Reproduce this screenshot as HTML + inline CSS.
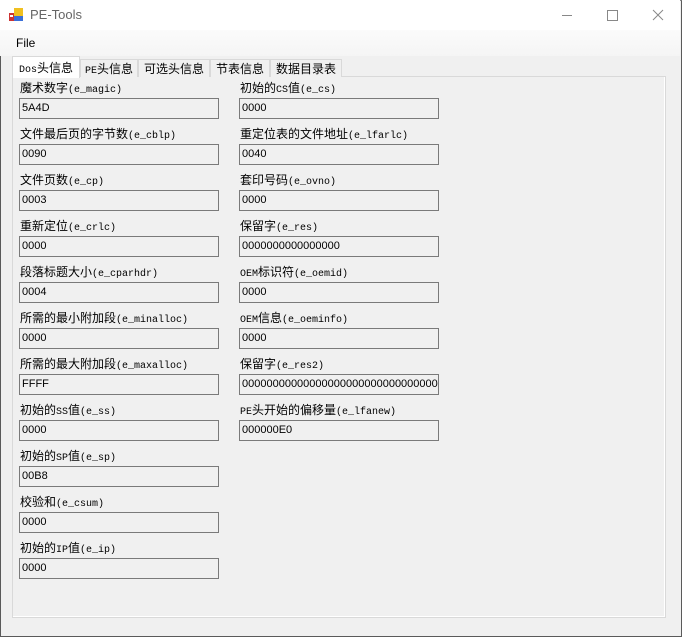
<!DOCTYPE html>
<html><head><meta charset="utf-8"><style>
*{margin:0;padding:0;box-sizing:border-box}
body{width:682px;height:637px;background:#f0f0f0;font-family:"Liberation Sans","Noto Sans CJK SC",sans-serif;font-size:12px;color:#000;position:relative;overflow:hidden}
.win{position:absolute;left:0;top:0;width:682px;height:637px;border:1px solid #5a5a5a;border-top-color:#888}
.title{position:absolute;left:0;top:0;width:680px;height:30px;background:#fff}
.title span{position:absolute;left:30px;top:7px;font-size:13px;color:#666}
.menu{position:absolute;left:0;top:30px;width:680px;height:26px;background:linear-gradient(#fbfbfb,#f5f5f5)}
.menu span{position:absolute;left:16px;top:6px;font-size:12px}
.tabs{position:absolute;top:56px;left:12px;height:21px}
.tab{position:absolute;top:3px;height:18px;border:1px solid #d9d9d9;border-bottom:none;background:#f0f0f0;font-size:12px;padding-top:1px;text-align:center;font-family:"Noto Sans CJK SC",sans-serif;line-height:16px}
.tab.sel{top:0;height:22px;background:#fff;z-index:2;padding-top:3px}
.page{position:absolute;left:12px;top:76px;width:654px;height:542px;border:1px solid #d9d9d9;background:#f0f0f0}
.page:after{content:"";position:absolute;inset:0;border:1px solid #fff;border-top:none;border-left:none}
.lbl{position:absolute;font-size:12px;font-family:"Noto Sans CJK SC",sans-serif;white-space:nowrap;line-height:16px}
i{font-style:normal;font-family:"Liberation Mono",monospace;font-size:10px}
.box{position:absolute;width:200px;height:21px;border:1px solid #7a7a7a;background:#f0f0f0;font-size:11px;padding:3px 0 0 2px;overflow:hidden;white-space:nowrap;font-family:"Liberation Sans",sans-serif}
</style></head><body>
<div class="win"></div>
<div class="title">
<svg style="position:absolute;left:9px;top:8px" width="14" height="14"><rect x="0" y="5" width="5" height="8" fill="#c33"/><rect x="5" y="0" width="9" height="8" fill="#f0c020"/><rect x="5" y="8" width="9" height="5" fill="#3a6fd8"/><rect x="1" y="7" width="3" height="2" fill="#fff"/></svg>
<span>PE-Tools</span>
<svg style="position:absolute;left:560px;top:8px" width="110" height="14"><line x1="2" y1="7.5" x2="12" y2="7.5" stroke="#888"/><rect x="47.5" y="2.5" width="10" height="10" fill="none" stroke="#888"/><path d="M93 2L103 12M103 2L93 12" stroke="#888"/></svg>
</div>
<div class="menu"><span>File</span></div>
<div class="page"></div>
<div class="tabs">
<div class="tab sel" style="left:0;width:68px"><i>Dos</i>头信息</div>
<div class="tab" style="left:68px;width:58px"><i>PE</i>头信息</div>
<div class="tab" style="left:126px;width:72px">可选头信息</div>
<div class="tab" style="left:198px;width:60px">节表信息</div>
<div class="tab" style="left:258px;width:72px">数据目录表</div>
</div>

<div class="lbl" style="left:20px;top:80px">魔术数字<i>(e_magic)</i></div><div class="box" style="left:19px;top:98px">5A4D</div>
<div class="lbl" style="left:20px;top:126px">文件最后页的字节数<i>(e_cblp)</i></div><div class="box" style="left:19px;top:144px">0090</div>
<div class="lbl" style="left:20px;top:172px">文件页数<i>(e_cp)</i></div><div class="box" style="left:19px;top:190px">0003</div>
<div class="lbl" style="left:20px;top:218px">重新定位<i>(e_crlc)</i></div><div class="box" style="left:19px;top:236px">0000</div>
<div class="lbl" style="left:20px;top:264px">段落标题大小<i>(e_cparhdr)</i></div><div class="box" style="left:19px;top:282px">0004</div>
<div class="lbl" style="left:20px;top:310px">所需的最小附加段<i>(e_minalloc)</i></div><div class="box" style="left:19px;top:328px">0000</div>
<div class="lbl" style="left:20px;top:356px">所需的最大附加段<i>(e_maxalloc)</i></div><div class="box" style="left:19px;top:374px">FFFF</div>
<div class="lbl" style="left:20px;top:402px">初始的<i>SS</i>值<i>(e_ss)</i></div><div class="box" style="left:19px;top:420px">0000</div>
<div class="lbl" style="left:20px;top:448px">初始的<i>SP</i>值<i>(e_sp)</i></div><div class="box" style="left:19px;top:466px">00B8</div>
<div class="lbl" style="left:20px;top:494px">校验和<i>(e_csum)</i></div><div class="box" style="left:19px;top:512px">0000</div>
<div class="lbl" style="left:20px;top:540px">初始的<i>IP</i>值<i>(e_ip)</i></div><div class="box" style="left:19px;top:558px">0000</div>

<div class="lbl" style="left:240px;top:80px">初始的<i>CS</i>值<i>(e_cs)</i></div><div class="box" style="left:239px;top:98px">0000</div>
<div class="lbl" style="left:240px;top:126px">重定位表的文件地址<i>(e_lfarlc)</i></div><div class="box" style="left:239px;top:144px">0040</div>
<div class="lbl" style="left:240px;top:172px">套印号码<i>(e_ovno)</i></div><div class="box" style="left:239px;top:190px">0000</div>
<div class="lbl" style="left:240px;top:218px">保留字<i>(e_res)</i></div><div class="box" style="left:239px;top:236px">0000000000000000</div>
<div class="lbl" style="left:240px;top:264px"><i>OEM</i>标识符<i>(e_oemid)</i></div><div class="box" style="left:239px;top:282px">0000</div>
<div class="lbl" style="left:240px;top:310px"><i>OEM</i>信息<i>(e_oeminfo)</i></div><div class="box" style="left:239px;top:328px">0000</div>
<div class="lbl" style="left:240px;top:356px">保留字<i>(e_res2)</i></div><div class="box" style="left:239px;top:374px">0000000000000000000000000000000000000000</div>
<div class="lbl" style="left:240px;top:402px"><i>PE</i>头开始的偏移量<i>(e_lfanew)</i></div><div class="box" style="left:239px;top:420px">000000E0</div>
</body></html>
